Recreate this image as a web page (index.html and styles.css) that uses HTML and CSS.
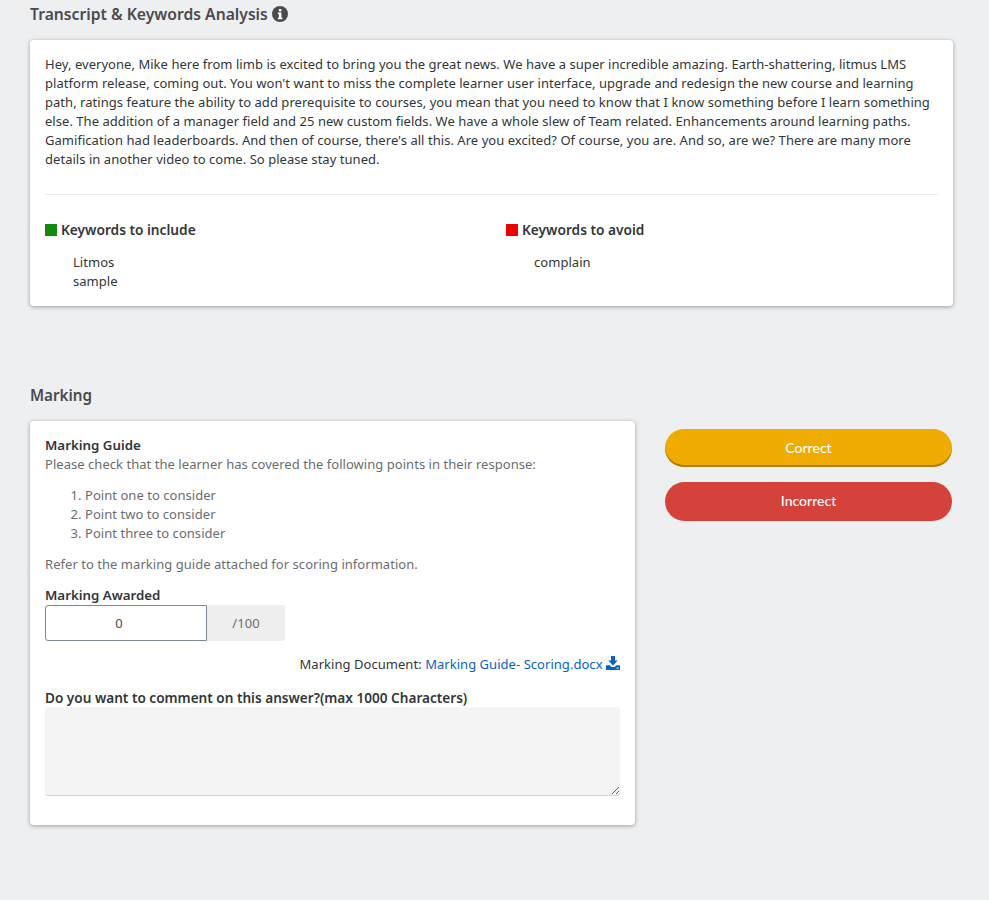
FILE: index.html
```html
<!DOCTYPE html>
<html lang="en">
<head>
<meta charset="utf-8">
<title>Transcript &amp; Keywords Analysis</title>
<link rel="stylesheet" href="styles.css">
</head>
<body>
<main class="page">
  <section class="transcript-section">
    <h2 class="section-title">Transcript &amp; Keywords Analysis
      <svg class="info-icon" viewBox="0 0 16 16" aria-hidden="true"><circle cx="8" cy="8" r="8" fill="#4a4a4f"/><rect x="6.8" y="3" width="2.6" height="2.4" rx=".5" fill="#fff"/><path d="M5.9 6.6h3.5v5h1v1.6H5.9v-1.6h1v-3.4h-1z" fill="#fff"/></svg>
    </h2>
    <div class="card transcript-card">
      <p class="transcript">Hey, everyone, Mike here from limb is excited to bring you the great news. We have a super incredible amazing. Earth-shattering, litmus LMS<br>platform release, coming out. You won't want to miss the complete learner user interface, upgrade and redesign the new course and learning<br>path, ratings feature the ability to add prerequisite to courses, you mean that you need to know that I know something before I learn something<br>else. The addition of a manager field and 25 new custom fields. We have a whole slew of Team related. Enhancements around learning paths.<br>Gamification had leaderboards. And then of course, there's all this. Are you excited? Of course, you are. And so, are we? There are many more<br>details in another video to come. So please stay tuned.</p>
      <hr class="divider">
      <div class="keywords">
        <div class="keyword-col">
          <h3 class="keyword-title"><span class="swatch swatch-green"></span>Keywords to include</h3>
          <ul class="keyword-list"><li>Litmos</li><li>sample</li></ul>
        </div>
        <div class="keyword-col">
          <h3 class="keyword-title"><span class="swatch swatch-red"></span>Keywords to avoid</h3>
          <ul class="keyword-list"><li>complain</li></ul>
        </div>
      </div>
    </div>
  </section>

  <section class="marking-section">
    <h2 class="section-title">Marking</h2>
    <div class="marking-row">
      <div class="card marking-card">
        <h3 class="label">Marking Guide</h3>
        <p class="muted">Please check that the learner has covered the following points in their response:</p>
        <ol class="points">
          <li>Point one to consider</li>
          <li>Point two to consider</li>
          <li>Point three to consider</li>
        </ol>
        <p class="muted">Refer to the marking guide attached for scoring information.</p>
        <label class="label awarded-label" for="score">Marking Awarded</label>
        <div class="score-group">
          <input class="score-input" id="score" type="text" value="0">
          <span class="score-total">/100</span>
        </div>
        <p class="document">Marking Document: <a class="doc-link" href="#">Marking Guide- Scoring.docx</a>
          <svg class="download-icon" viewBox="0 0 14 14" aria-hidden="true"><path d="M5 0h4v4.6h2.8L7 9.4 2.2 4.6H5z" fill="#0a5fc9"/><path d="M0 9.2h3.6L5.4 11h3.2l1.8-1.8H14V14H0z" fill="#0a5fc9"/><rect x="10.6" y="11.6" width="2" height="1" fill="#fff"/></svg>
        </p>
        <label class="label comment-label" for="comment">Do you want to comment on this answer?(max 1000 Characters)</label>
        <textarea class="comment" id="comment"></textarea>
      </div>
      <div class="actions">
        <button class="btn btn-correct" type="button">Correct</button>
        <button class="btn btn-incorrect" type="button">Incorrect</button>
      </div>
    </div>
  </section>
</main>
</body>
</html>
```
FILE: styles.css
```css
* { box-sizing: border-box; }
html, body { margin: 0; padding: 0; }
body {
  background: #edeff0;
  color: #32363a;
  font-family: "Noto Sans", "Open Sans", sans-serif;
  font-size: 13px;
  letter-spacing: .04px;
  line-height: 19px;
  height: 900px;
  overflow: hidden;
}
.page { padding: 0 36px 0 30px; }
.section-title {
  margin: 0;
  font-size: 15.7px;
  line-height: 20px;
  font-weight: 600;
  color: #4a4a4f;
  display: flex;
  align-items: center;
  gap: 4px;
  letter-spacing: 0;
}
.transcript-section .section-title { padding-top: 4px; margin-bottom: 16px; }
.marking-section .section-title { font-size: 15.2px; margin-bottom: 16px; }
.info-icon { width: 16px; height: 16px; margin-top: -1px; }
.card {
  background: #fff;
  border-radius: 4px;
  box-shadow: 0 1px 4px rgba(0,0,0,.35);
  padding: 15px;
}
.transcript-card { height: 266px; }
.transcript { margin: 0; white-space: nowrap; }
.divider { border: 0; border-top: 1px solid #e9eaeb; margin: 25px 0 25px; }
.keywords { display: flex; }
.keyword-col { width: 461px; flex: none; }
.keyword-title {
  margin: 0 0 14px;
  font-size: 13.7px;
  line-height: 19px;
  font-weight: 600;
  letter-spacing: 0;
  display: flex;
  align-items: center;
  gap: 4px;
}
.swatch { width: 12px; height: 12px; display: block; }
.swatch-green { background: #128a0e; }
.swatch-red { background: #f40000; }
.keyword-list { list-style: none; margin: 0; padding: 0 0 0 28px; }
.marking-section { margin-top: 79px; }
.marking-row { display: flex; gap: 30px; align-items: flex-start; }
.marking-card { width: 605px; height: 404px; flex: none; }
.label { display: block; margin: 0; font-size: 13.3px; line-height: 19px; font-weight: 600; letter-spacing: 0; }
.muted { margin: 0; color: #6a6d70; }
.points { margin: 12px 0 12px; padding: 0 0 0 40px; color: #6a6d70; }
.awarded-label { margin-top: 12px; }
.score-group { display: flex; width: 240px; height: 36px; }
.score-input {
  width: 162px;
  height: 36px;
  padding: 0 15px 0 1px;
  border: 1px solid #7c8a96;
  border-radius: 3px 0 0 3px;
  text-align: center;
  font: inherit;
  color: #4a4a4f;
  background: #fff;
  outline: none;
}
.score-total {
  flex: 1;
  background: #eeeeee;
  border-radius: 0 3px 3px 0;
  text-align: center;
  line-height: 36px;
  color: #6a6d70;
}
.document { margin: 14px 0 0; text-align: right; display: block; }
.doc-link { color: #0a5fc9; text-decoration: none; }
.download-icon { width: 14px; height: 14px; vertical-align: -1px; }
.comment-label { margin-top: 14px; font-size: 13.6px; }
.comment {
  display: block;
  width: 575px;
  height: 89px;
  margin: 0;
  border: 0;
  border-bottom: 1px solid #d5d5d5;
  border-radius: 3px;
  background: #f4f4f4;
  font: inherit;
}
.actions { flex: 1; padding-top: 8px; display: flex; flex-direction: column; gap: 15px; }
.btn {
  width: 287px;
  height: 39px;
  padding: 0 0 2px;
  border: 0;
  border-radius: 20px;
  color: #fff;
  font-family: "Lato", "Open Sans", sans-serif;
  font-size: 14px;
  font-weight: 500;
}
.btn-correct { background: #f0ab00; box-shadow: inset 0 -2px 0 #b07d00; height: 38px; }
.btn-incorrect { background: #d5413b; }
```
